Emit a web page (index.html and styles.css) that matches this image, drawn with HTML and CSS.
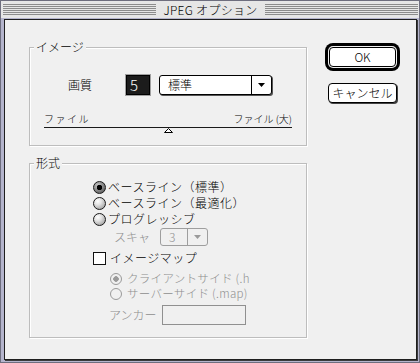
FILE: index.html
```html
<!DOCTYPE html>
<html lang="ja">
<head>
    <meta charset="UTF-8">
    <meta name="viewport" content="width=device-width, initial-scale=1.0">
    <title>JPEG オプション</title>
    <link rel="stylesheet" href="styles.css">
</head>
<body>

<div class="window">
    <div class="titlebar">
        <span class="stripes"></span>
        <span class="title">JPEG オプション</span>
        <span class="stripes"></span>
    </div>

    <div class="dialog">
        <div class="groups">
            <!-- Image quality -->
            <fieldset class="group group-image">
                <legend>イメージ</legend>
                <div class="quality-row">
                    <span class="quality-label">画質</span>
                    <span class="quality-value">5</span>
                    <div class="select quality-select">
                        <span class="select-text">標準</span>
                        <span class="select-arrow">
                            <svg width="7" height="4" viewBox="0 0 7 4"><polygon points="0,0 7,0 3.5,4" fill="#000"/></svg>
                        </span>
                    </div>
                </div>
                <div class="slider">
                    <div class="slider-labels">
                        <span class="slider-min">ファイル</span>
                        <span class="slider-max">ファイル (大)</span>
                    </div>
                    <div class="slider-track"></div>
                    <svg class="slider-thumb" width="9" height="5" viewBox="0 0 9 5"><polygon points="4.5,0.5 8.5,4.5 0.5,4.5" fill="#fff" stroke="#000" stroke-width="1"/></svg>
                </div>
            </fieldset>

            <!-- Format -->
            <fieldset class="group group-format">
                <legend>形式</legend>
                <div class="options">
                    <div class="option"><span class="radio checked"></span>ベースライン（標準）</div>
                    <div class="option"><span class="radio"></span>ベースライン（最適化）</div>
                    <div class="option"><span class="radio"></span>プログレッシブ</div>

                    <div class="scan-row disabled">
                        <span class="scan-label">スキャ</span>
                        <div class="select scan-select">
                            <span class="select-text">3</span>
                            <span class="select-arrow">
                                <svg width="7" height="4" viewBox="0 0 7 4"><polygon points="0,0 7,0 3.5,4" fill="#9a9a9a"/></svg>
                            </span>
                        </div>
                    </div>

                    <div class="check-row"><span class="checkbox"></span>イメージマップ</div>

                    <div class="sub-option disabled"><span class="radio-off checked"></span>クライアントサイド (.h</div>
                    <div class="sub-option disabled"><span class="radio-off"></span>サーバーサイド (.map)</div>

                    <div class="anchor-row disabled">
                        <span class="anchor-label">アンカー</span>
                        <span class="anchor-input"></span>
                    </div>
                </div>
            </fieldset>
        </div>

        <div class="buttons">
            <button class="btn btn-default">OK</button>
            <button class="btn btn-cancel">キャンセル</button>
        </div>
    </div>
</div>

</body>
</html>
```

FILE: styles.css
```css
body {
    margin: 0;
    font-family: "Noto Sans CJK JP", "Liberation Sans", sans-serif;
    font-size: 12px;
    font-weight: 300;
    line-height: 14px;
    color: #000;
}

.window {
    width: 420px;
    height: 363px;
    box-sizing: border-box;
    border: 1px solid #6e6e7e;
    background-color: #b4b4cc;
    display: flex;
    flex-direction: column;
}

.titlebar {
    height: 17px;
    flex: none;
    display: flex;
    align-items: center;
    gap: 6px;
    padding: 0 1px 0 2px;
    background-color: #e6e6e6;
}

.stripes {
    flex: 1;
    height: 11px;
    background: repeating-linear-gradient(to bottom, #8c8c8c 0 1px, transparent 1px 2px);
}

.title {
    line-height: 14px;
    padding: 0 1px;
    letter-spacing: 0.3px;
}

.dialog {
    flex: 1;
    margin: 1px 2px 2px 3px;
    border: 1px solid #1e1e1e;
    box-shadow: 1px 1px 0 #3c3c3c;
    background-color: #f0f0f0;
    display: flex;
    align-items: flex-start;
    padding: 20px 0 0 24px;
}

.groups {
    width: 278px;
}

.group {
    margin: 0;
    padding: 0;
    width: 278px;
    min-width: 0;
    box-sizing: border-box;
    border: 1px solid #bdbdbd;
    box-shadow: 1px 1px 0 #fff, inset 1px 1px 0 #fff;
}

.group legend {
    margin-left: 4px;
    padding: 0 2px;
    line-height: 14px;
    background-color: #f0f0f0;
}

.group-format {
    margin-top: 10px;
}

/* quality row */
.quality-row {
    display: flex;
    align-items: center;
    height: 22px;
    margin: 20px 0 0 38px;
}

.quality-label {
    width: 24px;
}

.quality-value {
    width: 24px;
    height: 20px;
    box-sizing: border-box;
    margin-left: 34px;
    padding-left: 3px;
    border: 1px solid #000;
    background-color: #1c1c1c;
    box-shadow: 0 0 0 1px #a0a0a0;
    color: #fff;
    font-size: 15px;
    line-height: 18px;
}

.select {
    display: flex;
    box-sizing: border-box;
    border: 1px solid #000;
    border-radius: 3px;
    background-color: #fff;
}

.select-text {
    flex: 1;
    padding-left: 8px;
}

.select-arrow {
    width: 19px;
    border-left: 1px solid #000;
    display: flex;
    align-items: center;
    justify-content: center;
}

.quality-select {
    width: 113px;
    height: 20px;
    margin-left: 9px;
    line-height: 18px;
    box-shadow: 1px 1px 0 #555;
}

/* slider */
.slider {
    margin: 16px 14px 12px 14px;
}

.slider-labels {
    display: flex;
    justify-content: space-between;
    align-items: flex-end;
    height: 13px;
    font-size: 10px;
    line-height: 13px;
}

.slider-min {
    letter-spacing: 1.5px;
}

.slider-track {
    margin-top: 2px;
    height: 1px;
    background-color: #1a1a1a;
}

.slider-thumb {
    display: block;
    margin: 0 auto;
}

/* format options */
.options {
    padding: 9px 0 12px 0;
}

.option {
    display: flex;
    align-items: center;
    gap: 2px;
    height: 16px;
    line-height: 16px;
    margin-left: 63px;
    letter-spacing: 0.5px;
}

.radio {
    flex: none;
    width: 13px;
    height: 13px;
    box-sizing: border-box;
    border: 1px solid #1a1a1a;
    border-radius: 50%;
    background: radial-gradient(circle at 35% 30%, #fff 0, #e2e2e2 35%, #8a8a8a 100%);
}

.radio.checked {
    background: radial-gradient(circle, #000 0 2.5px, transparent 3px),
                radial-gradient(circle at 35% 30%, #c4c4c4 0, #7a7a7a 60%, #444 100%);
}

.disabled {
    color: #8e8e8e;
}

.scan-row {
    display: flex;
    align-items: center;
    height: 18px;
    margin: 1px 0 0 84px;
}

.scan-label {
    width: 36px;
}

.scan-select {
    width: 48px;
    height: 18px;
    margin-left: 10px;
    line-height: 16px;
    border-color: #9e9e9e;
    background-color: #f0f0f0;
}

.scan-select .select-arrow {
    border-left-color: #9e9e9e;
}

.check-row {
    display: flex;
    align-items: center;
    gap: 4px;
    height: 16px;
    line-height: 16px;
    margin: 4px 0 0 63px;
    letter-spacing: 0.5px;
}

.checkbox {
    flex: none;
    width: 13px;
    height: 13px;
    box-sizing: border-box;
    border: 1px solid #111;
    background-color: #fff;
}

.sub-option {
    display: flex;
    align-items: center;
    gap: 5px;
    height: 15px;
    line-height: 15px;
    margin-left: 80px;
    font-size: 11.5px;
    letter-spacing: 0.3px;
}

.check-row + .sub-option {
    margin-top: 5px;
}

.radio-off {
    flex: none;
    width: 12px;
    height: 12px;
    box-sizing: border-box;
    border: 1px solid #9a9a9a;
    border-radius: 50%;
    background-color: #f0f0f0;
}

.radio-off.checked {
    background: radial-gradient(circle, #9a9a9a 0 2.5px, transparent 3px);
}

.anchor-row {
    display: flex;
    align-items: center;
    height: 20px;
    margin: 4px 0 0 79px;
}

.anchor-label {
    width: 48px;
}

.anchor-input {
    width: 84px;
    height: 20px;
    box-sizing: border-box;
    margin-left: 5px;
    border: 1px solid #909090;
}

/* buttons */
.buttons {
    width: 75px;
    margin-left: 18px;
    padding-top: 3px;
    display: flex;
    flex-direction: column;
    align-items: center;
}

.btn {
    height: 20px;
    box-sizing: border-box;
    padding: 0;
    border: 1px solid #000;
    border-radius: 4px;
    background-color: #fff;
    color: #000;
    font-family: "Noto Sans CJK JP", "Liberation Sans", sans-serif;
    font-size: 12px;
    font-weight: 300;
    line-height: 18px;
    cursor: pointer;
}

.btn-default {
    width: 67px;
    margin: 4px;
    box-shadow: 0 0 0 1px #f0f0f0, 0 0 0 4px #000;
}

.btn-cancel {
    width: 69px;
    margin-top: 12px;
    box-shadow: 1px 1px 0 #444;
}
```
